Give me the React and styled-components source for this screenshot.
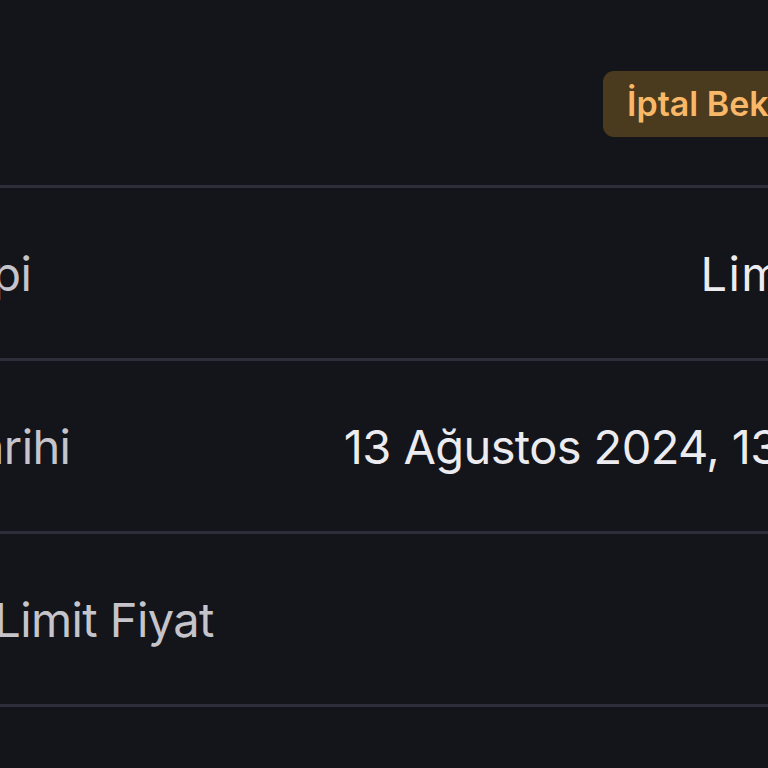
import React from "react";
import styled, { createGlobalStyle } from "styled-components";

const Global = createGlobalStyle`
  html, body { margin: 0; padding: 0; background: #14151a; }
  body { overflow: hidden; font-family: "Inter", "Noto Sans", sans-serif; }
`;

const Screen = styled.div`
  width: 768px;
  height: 768px;
  overflow: hidden;
  background: #14151a;
`;

const Sheet = styled.div`
  margin-left: -157px;
  width: 996px;
  display: flex;
  flex-direction: column;
`;

const Header = styled.div`
  height: 185px;
  display: flex;
  align-items: center;
  justify-content: flex-start;
  padding-left: 760px;
`;

const Badge = styled.span`
  display: inline-flex;
  align-items: center;
  height: 66px;
  padding: 0 24px;
  margin-top: 22px;
  border-radius: 11px;
  background: #4a3a1e;
  color: #f8b867;
  font-size: 34px;
  font-weight: 600;
  white-space: nowrap;
`;

const Row = styled.div`
  height: 170px;
  border-top: 3px solid #2e2d3a;
  display: flex;
  align-items: center;
  justify-content: space-between;
`;

const Label = styled.span`
  color: #c4c4ca;
  font-size: 47px;
  letter-spacing: -0.6px;
  white-space: nowrap;
`;

const Value = styled.span`
  color: #ececf0;
  font-size: 47px;
  letter-spacing: ${(p) => (p.$wide ? "1.4px" : "-0.6px")};
  white-space: nowrap;
`;

const rows = [
  { label: "Emir Tipi", value: "Limitli", wide: true },
  { label: "Emir Tarihi", value: "13 Ağustos 2024, 13:41" },
  { label: "Girilen Limit Fiyat", value: "" },
  { label: "", value: "" },
];

export default function App() {
  return (
    <Screen>
      <Global />
      <Sheet>
        <Header>
          <Badge>İptal Bekliyor</Badge>
        </Header>
        {rows.map((r, i) => (
          <Row key={i}>
            <Label>{r.label}</Label>
            <Value $wide={r.wide}>{r.value}</Value>
          </Row>
        ))}
      </Sheet>
    </Screen>
  );
}
